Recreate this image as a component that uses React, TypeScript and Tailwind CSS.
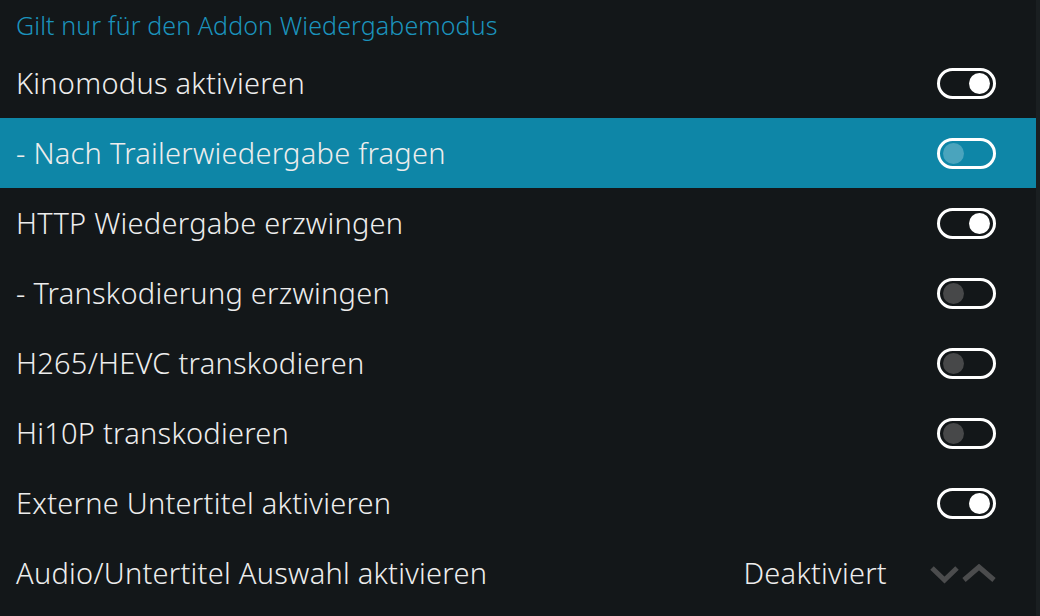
import React from "react";

type Row = {
  label: string;
  on?: boolean;
  value?: string;
};

const rows: Row[] = [
  { label: "Kinomodus aktivieren", on: true },
  { label: "- Nach Trailerwiedergabe fragen", on: false },
  { label: "HTTP Wiedergabe erzwingen", on: true },
  { label: "- Transkodierung erzwingen", on: false },
  { label: "H265/HEVC transkodieren", on: false },
  { label: "Hi10P transkodieren", on: false },
  { label: "Externe Untertitel aktivieren", on: true },
  { label: "Audio/Untertitel Auswahl aktivieren", value: "Deaktiviert" },
];

const Toggle = ({ on, focused }: { on: boolean; focused: boolean }) => (
  <div
    className={`flex h-[31px] w-[59px] items-center rounded-full border-[3px] border-white px-[3px] ${
      on ? "justify-end" : "justify-start"
    }`}
  >
    <div
      className={`h-[21px] w-[21px] rounded-full ${
        on ? "bg-white" : focused ? "bg-white/25" : "bg-[#474849]"
      }`}
    />
  </div>
);

// up/down spinner arrows of the list value
const Spinner = () => (
  <svg width="68" height="20" viewBox="0 0 68 20" className="ml-[41px] mt-[2px]">
    <path d="M4 4 L16.5 16 L29 4" fill="none" stroke="#4b4c4d" strokeWidth="5" />
    <path d="M36 16 L51 3 L66 16" fill="none" stroke="#4b4c4d" strokeWidth="5" />
  </svg>
);

export default function App() {
  return (
    <div
      className="flex h-[616px] w-[1040px] overflow-hidden bg-[#131719] font-light text-[#ededed]"
      style={{ fontFamily: '"Noto Sans", "Open Sans", sans-serif' }}
    >
      <div className="flex w-[1036px] flex-col">
        <div className="flex h-[48px] items-center pl-[16px] pt-[3px] text-[25px] tracking-[0.1px] text-[#1b93bd]">
          Gilt nur für den Addon Wiedergabemodus
        </div>
        {rows.map((row, i) => {
          const focused = i === 1;
          return (
            <div
              key={row.label}
              className={`flex h-[70px] shrink-0 items-center pl-[16px] pr-[40px] text-[29px] tracking-[0.25px] ${
                focused ? "bg-[#0e86a7]" : ""
              }`}
            >
              <span className="flex-1">{row.label}</span>
              {row.value ? (
                <div className="flex items-center">
                  <span>{row.value}</span>
                  <Spinner />
                </div>
              ) : (
                <Toggle on={!!row.on} focused={focused} />
              )}
            </div>
          );
        })}
      </div>
      <div className="flex-1 bg-[#1a1f21]" />
    </div>
  );
}
